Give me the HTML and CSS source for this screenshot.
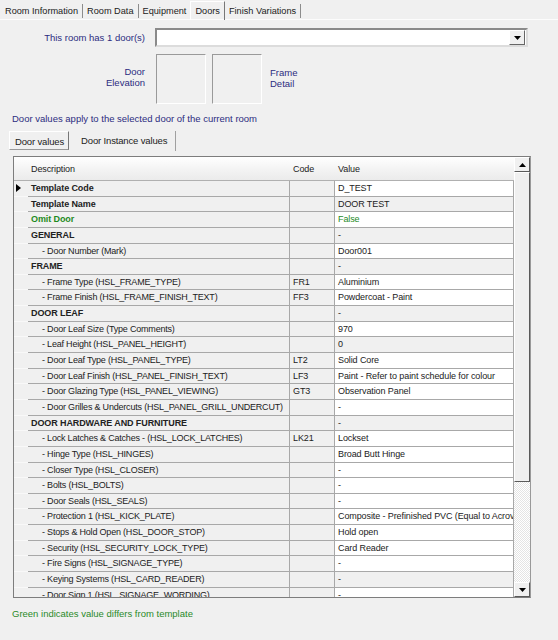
FILE: index.html
```html
<!DOCTYPE html>
<html lang="en">
<head>
  <meta charset="UTF-8">
  <title>Doors</title>
  <link rel="stylesheet" href="styles.css">
</head>
<body>
  <div class="tabs">
    <div class="tab">Room Information</div>
    <div class="tab">Room Data</div>
    <div class="tab">Equipment</div>
    <div class="tab active">Doors</div>
    <div class="tab">Finish Variations</div>
  </div>

  <div class="count-row">
    <label class="label">This room has 1 door(s)</label>
    <div class="select">
      <span class="drop-btn"><svg width="7" height="4" viewBox="0 0 7 4"><path d="M0 0h7L3.5 4z" fill="#000"/></svg></span>
    </div>
  </div>

  <div class="pictures">
    <div class="label pic-label">Door<br>Elevation</div>
    <div class="pic"></div>
    <div class="pic"></div>
    <div class="label frame-label">Frame<br>Detail</div>
  </div>

  <p class="note">Door values apply to the selected door of the current room</p>

  <div class="subtabs">
    <div class="subtab active">Door values</div>
    <div class="subtab">Door Instance values</div>
  </div>

  <div class="grid">
    <div class="rows">
      <div class="head">
        <div></div>
        <div class="cell">Description</div>
        <div class="cell">Code</div>
        <div class="cell">Value</div>
      </div>
      <div id="rows"></div>
    </div>
    <div class="scroll">
      <div class="sbtn"><svg width="7" height="4" viewBox="0 0 7 4"><path d="M0 4h7L3.5 0z" fill="#000"/></svg></div>
      <div class="thumb"></div>
      <div class="track"></div>
      <div class="sbtn"><svg width="7" height="4" viewBox="0 0 7 4"><path d="M0 0h7L3.5 4z" fill="#000"/></svg></div>
    </div>
  </div>

  <p class="legend">Green indicates value differs from template</p>

  <script>
    // kind: b = bold heading, g = changed (green), s = sub item; 5th field marks a read-only value
    const rows = [
      ['b', 'Template Code', '', 'D_TEST'],
      ['b', 'Template Name', '', 'DOOR TEST', 1],
      ['g', 'Omit Door', '', 'False'],
      ['b', 'GENERAL', '', '-', 1],
      ['s', '- Door Number (Mark)', '', 'Door001'],
      ['b', 'FRAME', '', '-', 1],
      ['s', '- Frame Type (HSL_FRAME_TYPE)', 'FR1', 'Aluminium'],
      ['s', '- Frame Finish  (HSL_FRAME_FINISH_TEXT)', 'FF3', 'Powdercoat - Paint'],
      ['b', 'DOOR LEAF', '', '-', 1],
      ['s', '- Door Leaf Size (Type Comments)', '', '970'],
      ['s', '- Leaf Height (HSL_PANEL_HEIGHT)', '', '0', 1],
      ['s', '- Door Leaf Type (HSL_PANEL_TYPE)', 'LT2', 'Solid Core'],
      ['s', '- Door Leaf Finish (HSL_PANEL_FINISH_TEXT)', 'LF3', 'Paint - Refer to paint schedule for colour'],
      ['s', '- Door Glazing Type (HSL_PANEL_VIEWING)', 'GT3', 'Observation Panel'],
      ['s', '- Door Grilles & Undercuts (HSL_PANEL_GRILL_UNDERCUT)', '', '-'],
      ['b', 'DOOR HARDWARE AND FURNITURE', '', '-', 1],
      ['s', '- Lock Latches & Catches - (HSL_LOCK_LATCHES)', 'LK21', 'Lockset'],
      ['s', '- Hinge Type (HSL_HINGES)', '', 'Broad Butt Hinge'],
      ['s', '- Closer Type (HSL_CLOSER)', '', '-'],
      ['s', '- Bolts (HSL_BOLTS)', '', '-'],
      ['s', '- Door Seals (HSL_SEALS)', '', '-'],
      ['s', '- Protection 1 (HSL_KICK_PLATE)', '', 'Composite - Prefinished PVC (Equal to Acrovyn)'],
      ['s', '- Stops & Hold Open (HSL_DOOR_STOP)', '', 'Hold open'],
      ['s', '- Security (HSL_SECURITY_LOCK_TYPE)', '', 'Card Reader'],
      ['s', '- Fire Signs (HSL_SIGNAGE_TYPE)', '', '-'],
      ['s', '- Keying Systems (HSL_CARD_READER)', '', '-', 1],
      ['s', '- Door Sign 1 (HSL_SIGNAGE_WORDING)', '', '-']
    ];

    const box = document.getElementById('rows');
    rows.forEach((r, i) => {
      const row = document.createElement('div');
      row.className = 'row ' + r[0] + (r[4] ? ' ro' : '');
      row.innerHTML = `
        <div class="rh">${i === 0 ? '<span class="cur"></span>' : ''}</div>
        <div class="cell desc"></div>
        <div class="cell code"></div>
        <div class="cell val"></div>
      `;
      row.querySelector('.desc').textContent = r[1];
      row.querySelector('.code').textContent = r[2];
      row.querySelector('.val').textContent = r[3];
      box.appendChild(row);
    });
  </script>
</body>
</html>
```

FILE: styles.css
```css
body {
  margin: 0;
  width: 558px;
  height: 640px;
  overflow: hidden;
  background: #f0f0f0;
  font-family: 'Liberation Sans', Arial, sans-serif;
  font-size: 9.5px;
  color: #222;
}

.tabs {
  display: flex;
  height: 19px;
  padding-left: 1px;
  border-bottom: 1px solid #fcfcfc;
  font-size: 9.2px;
}

.tab {
  margin-top: 4px;
  padding: 0 4px;
  height: 14px;
  line-height: 14px;
  border-right: 1px solid #8c8c8c;
}

.tab.active {
  margin-top: 1px;
  margin-left: -1px;
  height: 18px;
  line-height: 19px;
  padding: 0 4px;
  border: 1px solid #fff;
  border-right-color: #777;
  border-bottom: none;
}

.label {
  width: 145px;
  text-align: right;
  color: #2c2c80;
}

.count-row {
  display: flex;
  align-items: center;
  margin-top: 8px;
}

.count-row .label {
  margin-right: 10px;
}

.select {
  position: relative;
  width: 369px;
  height: 15px;
  background: #fff;
  border: 2px solid #8a8a8a;
  border-right-color: #dcdcdc;
  border-bottom-color: #dcdcdc;
}

.drop-btn {
  position: absolute;
  right: 1px;
  top: 0;
  width: 14px;
  height: 13px;
  background: #f0f0f0;
  border: 1px solid #fff;
  border-right-color: #666;
  border-bottom-color: #666;
  display: flex;
  align-items: center;
  justify-content: center;
}

.pictures {
  display: flex;
  align-items: center;
  margin-top: 6px;
  height: 51px;
}

.pic-label {
  margin-right: 11px;
  margin-top: -4px;
  line-height: 11px;
}

.pic {
  width: 48px;
  height: 48px;
  border: 1px solid #9a9a9a;
  border-right-color: #fff;
  border-bottom-color: #fff;
  margin-right: 6px;
}

.frame-label {
  width: auto;
  text-align: left;
  margin-left: 2px;
  margin-top: -1px;
  line-height: 11px;
}

.note {
  margin: 9px 0 0 12px;
  line-height: 12px;
  color: #2c2c80;
}

.subtabs {
  display: flex;
  margin: 6px 0 0 9px;
  height: 20px;
  letter-spacing: -0.15px;
}

.subtab {
  padding: 0 8px 0 8px;
  line-height: 20px;
  border-right: 1px solid #a0a0a0;
}

.subtab.active {
  padding: 0 4px 0 5px;
  height: 17px;
  line-height: 19px;
  white-space: nowrap;
  border: 1px solid #fff;
  border-right-color: #777;
  border-bottom-color: #999;
  margin-right: 4px;
}

.grid {
  display: flex;
  margin: 5px 0 0 13px;
  width: 516px;
  height: 440px;
  border: 1px solid #7d7d7d;
  border-right-color: #999;
  overflow: hidden;
  background: #f0f0f0;
  font-size: 9px;
  letter-spacing: -0.1px;
}

.rows {
  width: 500px;
}

.head,
.row {
  display: grid;
  grid-template-columns: 14px 262px 45px 179px;
}

.head {
  height: 23px;
  align-items: center;
  background: linear-gradient(#fff, #f4f4f4 50%, #ebebeb);
  border-bottom: 1px solid #b0b0b0;
}

.cell {
  padding-left: 3px;
  white-space: nowrap;
  overflow: hidden;
}

.row {
  height: 15.65px;
  line-height: 14px;
}

.row .cell {
  border-bottom: 1px solid #a8a8a8;
  border-right: 1px solid #a8a8a8;
  box-sizing: border-box;
}

.row .rh {
  position: relative;
  border-bottom: 1px solid #f8f8f8;
  box-sizing: border-box;
}

.cur {
  position: absolute;
  left: 2px;
  top: 3px;
  border-left: 5px solid #000;
  border-top: 4px solid transparent;
  border-bottom: 4px solid transparent;
}

.row .val {
  background: #fff;
}

.row.ro .val {
  background: #f0f0f0;
}

.row.s .desc {
  padding-left: 14px;
  letter-spacing: -0.2px;
}

.row.b .desc {
  font-weight: bold;
}

.row.g .desc {
  color: #1e8a1e;
  font-weight: bold;
}

.row.g .val {
  color: #1e8a1e;
}

.scroll {
  width: 16px;
  display: flex;
  flex-direction: column;
}

.sbtn {
  height: 13px;
  background: #f0f0f0;
  border: 1px solid #fff;
  border-right-color: #5a5a5a;
  border-bottom-color: #5a5a5a;
  display: flex;
  align-items: center;
  justify-content: center;
}

.thumb {
  height: 308px;
  background: #f0f0f0;
  border: 1px solid #fff;
  border-right-color: #5a5a5a;
  border-bottom-color: #5a5a5a;
}

.track {
  flex: 1;
  background: repeating-conic-gradient(#fff 0 25%, #e4e4e4 0 50%) 0 0 / 2px 2px;
}

.legend {
  margin: 10px 0 0 12px;
  color: #2a8a2a;
}
```
